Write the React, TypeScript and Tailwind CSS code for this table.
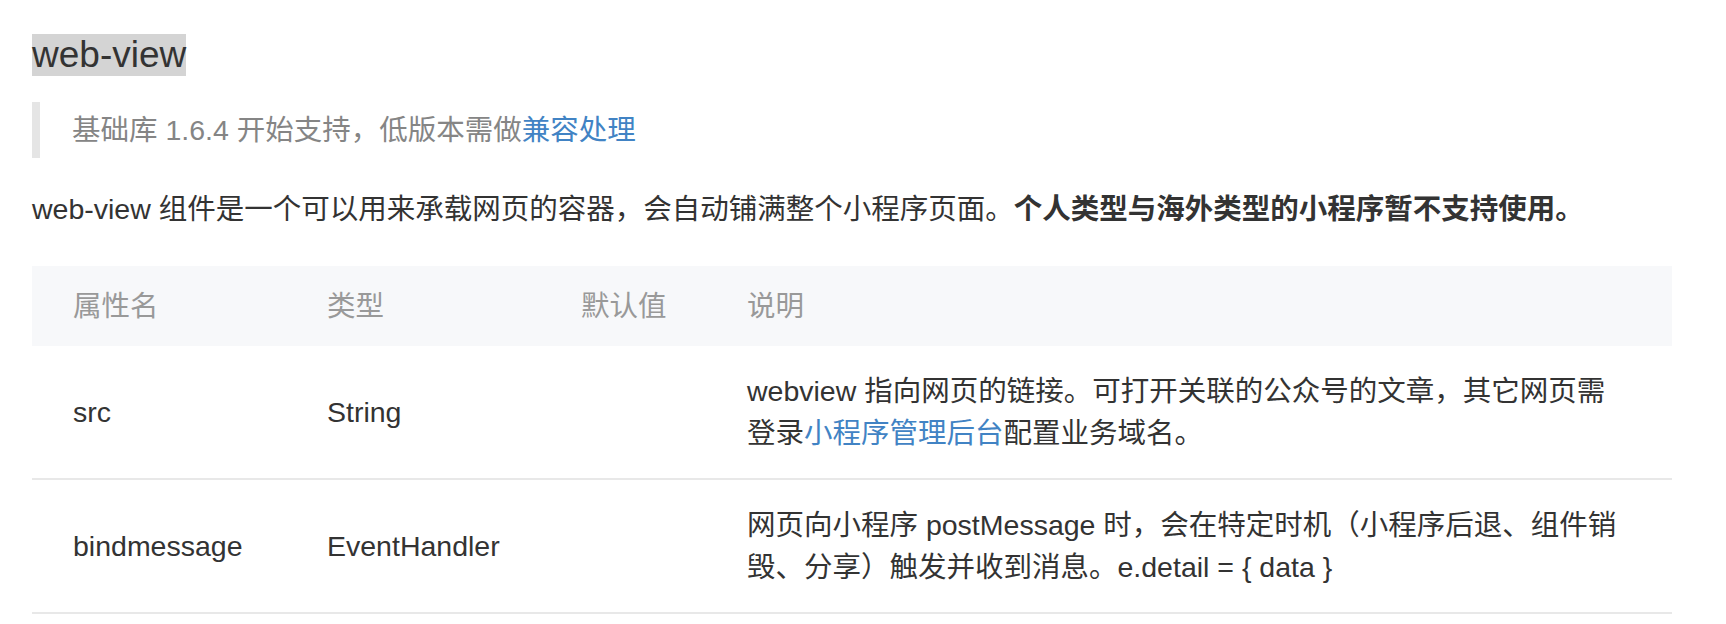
import React from "react";

const font = "font-['Liberation_Sans','Noto_Sans_CJK_SC',sans-serif]";

export default function App() {
  return (
    <div className={`${font} bg-white text-[#333] min-h-[624px] pl-[32px] pt-[34px]`}>
      <div>
        <span className="inline-block bg-[#d4d4d4] text-[37px] leading-[42px] text-[#333]">web-view</span>
      </div>

      <div className="mt-[26px] border-l-[8px] border-[#e5e5e5] pl-[32px] py-[7px] text-[28.5px] leading-[42px] text-[#858585]">
        基础库 1.6.4 开始支持，低版本需做<a className="text-[#4183c4]">兼容处理</a>
      </div>

      <p className="mt-[30px] text-[28.5px] leading-[42px] text-[#333]">
        web-view 组件是一个可以用来承载网页的容器，会自动铺满整个小程序页面。<strong className="font-bold">个人类型与海外类型的小程序暂不支持使用。</strong>
      </p>

      <div className="mt-[36px] w-[1640px] text-[28.5px] leading-[42px]">
        <div className="grid grid-cols-[254px_254px_166px_966px] bg-[#f7f8fa] text-[#999]">
          <div className="pl-[41px] py-[19px]">属性名</div>
          <div className="pl-[41px] py-[19px]">类型</div>
          <div className="pl-[41px] py-[19px]">默认值</div>
          <div className="pl-[41px] pr-[48px] py-[19px]">说明</div>
        </div>

        <div className="grid grid-cols-[254px_254px_166px_966px] items-center border-b-2 border-[#e8e8e8] text-[#333]">
          <div className="pl-[41px] py-[24px]">src</div>
          <div className="pl-[41px] py-[24px]">String</div>
          <div className="pl-[41px] py-[24px]"></div>
          <div className="pl-[41px] pr-[48px] py-[24px]">
            webview 指向网页的链接。可打开关联的公众号的文章，其它网页需登录<a className="text-[#4183c4]">小程序管理后台</a>配置业务域名。
          </div>
        </div>

        <div className="grid grid-cols-[254px_254px_166px_966px] items-center border-b-2 border-[#e8e8e8] text-[#333]">
          <div className="pl-[41px] py-[24px]">bindmessage</div>
          <div className="pl-[41px] py-[24px]">EventHandler</div>
          <div className="pl-[41px] py-[24px]"></div>
          <div className="pl-[41px] pr-[48px] py-[24px]">
            网页向小程序 postMessage 时，会在特定时机（小程序后退、组件销毁、分享）触发并收到消息。e.detail = {"{"} data {"}"}
          </div>
        </div>
      </div>
    </div>
  );
}
